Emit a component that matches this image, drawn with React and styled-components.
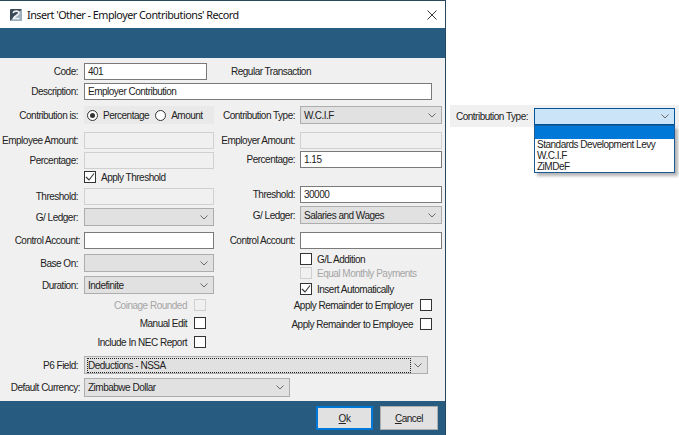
import styled, { createGlobalStyle } from 'styled-components';

const Global = createGlobalStyle`
  html, body {
    margin: 0;
    background: #fff;
  }
  body {
    font-family: "Liberation Sans", Arial, sans-serif;
    font-size: 10px;
    letter-spacing: -0.5px;
    color: #222;
  }
`;

const Page = styled.div`
  width: 679px;
  height: 435px;
  display: flex;
  overflow: hidden;
`;
const Dialog = styled.div`
  width: 445px;
  height: 434px;
  flex: none;
  display: flex;
  flex-direction: column;
  background: #f0f0f0;
  border-top: 1px solid #2a4a5e;
  border-right: 1px solid #24485f;
  border-bottom: 1px solid #24485f;
  box-sizing: content-box;
`;
const TitleBar = styled.div`
  height: 27px;
  display: flex;
  align-items: center;
  background: #fff;
  padding: 0 8px 0 9px;
  font-family: "Noto Sans", sans-serif;
  font-size: 10.8px;
  letter-spacing: -0.5px;
  color: #111;
`;
const TitleText = styled.span`
  flex: 1;
  margin-left: 4px;
`;
const Band = styled.div`
  height: 30px;
  background: #275b80;
`;
const Body = styled.div`
  flex: 1;
  padding-top: 5px;
  display: flex;
  flex-direction: column;
`;
const Row = styled.div`
  display: flex;
  align-items: center;
  height: ${p => p.$h || 18}px;
  margin-top: ${p => p.$top || 0}px;
`;
const Label = styled.label`
  width: ${p => p.$w || 78}px;
  flex: none;
  text-align: right;
  white-space: nowrap;
  margin-right: ${p => p.$gap || 6}px;
`;
const Field = styled.div`
  width: ${p => p.$w}px;
  height: 100%;
  box-sizing: border-box;
  padding: 0 3px;
  display: flex;
  align-items: center;
  background: ${p => (p.$off ? '#f0f0f0' : '#fff')};
  border: 1px solid ${p => (p.$off ? '#d0d0d0' : '#7a7a7a')};
`;
const Combo = styled.div`
  width: ${p => p.$w}px;
  height: 100%;
  box-sizing: border-box;
  padding: 0 5px 0 3px;
  display: flex;
  align-items: center;
  justify-content: space-between;
  background: #e1e1e1;
  border: 1px solid #adadad;
`;
const ComboText = styled.span`
  flex: 1;
  line-height: 13px;
  outline: ${p => (p.$focus ? '1px dotted #222' : 'none')};
  margin-right: ${p => (p.$focus ? '4px' : '0')};
`;
const Columns = styled.div`
  display: flex;
  margin-top: 6px;
`;
const Column = styled.div`
  display: flex;
  flex-direction: column;
  width: ${p => p.$w}px;
  flex: none;
`;
const RadioGroup = styled.div`
  width: 130px;
  height: 100%;
  box-sizing: border-box;
  background: #e9e9e9;
  display: flex;
  align-items: center;
  padding-left: 3px;
`;
const Radio = styled.span`
  width: 11px;
  height: 11px;
  flex: none;
  box-sizing: border-box;
  border-radius: 50%;
  border: 1px solid #333;
  background: #fff;
  display: flex;
  align-items: center;
  justify-content: center;
  margin: 0 5px 0 ${p => p.$left || 0}px;
  &::after {
    content: '';
    display: ${p => (p.$on ? 'block' : 'none')};
    width: 5px;
    height: 5px;
    border-radius: 50%;
    background: #333;
  }
`;
const Box = styled.span`
  width: 12px;
  height: 12px;
  flex: none;
  box-sizing: border-box;
  border: 1px solid ${p => (p.$off ? '#cfcfcf' : '#333')};
  background: ${p => (p.$off ? '#f0f0f0' : '#fff')};
  display: flex;
  align-items: center;
  justify-content: center;
`;
const CheckRow = styled(Row)`
  justify-content: ${p => (p.$end ? 'flex-end' : 'flex-start')};
  padding-left: ${p => p.$left || 0}px;
  padding-right: ${p => p.$right || 0}px;
`;
const CheckText = styled.span`
  margin: ${p => (p.$after ? '0 7px 0 0' : '0 0 0 5px')};
  white-space: nowrap;
  color: ${p => (p.$off ? '#a5a5a5' : '#222')};
`;
const Note = styled.span`
  margin-left: 24px;
`;
const Footer = styled.div`
  height: 34px;
  background: #275b80;
  display: flex;
  align-items: center;
  justify-content: flex-end;
  gap: 7px;
  padding-right: 7px;
`;
const Button = styled.button`
  width: ${p => p.$w}px;
  height: 24px;
  padding: 0;
  box-sizing: border-box;
  font: inherit;
  letter-spacing: inherit;
  color: #222;
  background: #e1e1e1;
  border: ${p => (p.$main ? '2px solid #0078d7' : '1px solid #adadad')};
  u {
    text-decoration: underline;
  }
`;
const Side = styled.div`
  flex: 1;
  padding: 105px 0 0 4px;
`;
const SideStrip = styled.div`
  height: 22px;
  background: #f0f0f0;
  display: flex;
  align-items: center;
  box-sizing: border-box;
  padding: 0 0 0 6px;
`;
const SideLabel = styled.span`
  width: 78px;
  flex: none;
  white-space: nowrap;
`;
const DropWrap = styled.div`
  position: relative;
  width: 141px;
  height: 17px;
  margin-top: 1px;
`;
const DropHead = styled.div`
  height: 17px;
  box-sizing: border-box;
  background: #cce4f7;
  border: 1px solid #005499;
  display: flex;
  align-items: center;
  justify-content: flex-end;
  padding-right: 5px;
`;
const DropList = styled.ul`
  position: absolute;
  left: 0;
  right: 0;
  top: 17px;
  margin: 0;
  padding: 0;
  list-style: none;
  background: #fff;
  border: 1px solid #1a5a96;
  box-sizing: border-box;
  box-shadow: 3px 3px 3px rgba(0, 0, 0, 0.3);
`;
const DropItem = styled.li`
  height: ${p => (p.$sel ? 13 : 11)}px;
  line-height: 11px;
  padding-left: 2px;
  background: ${p => (p.$sel ? '#0078d7' : '#fff')};
  white-space: nowrap;
`;

const Chevron = () => (
  <svg width="8" height="5" viewBox="0 0 8 5" fill="none">
    <path d="M0.5 0.5 L4 4 L7.5 0.5" stroke="#6a6a6a" strokeWidth="1" />
  </svg>
);

const Tick = () => (
  <svg width="10" height="10" viewBox="0 0 10 10" fill="none">
    <path d="M1 5 L4 8 L9 1.5" stroke="#333" strokeWidth="1.1" />
  </svg>
);

const AppIcon = () => (
  <svg width="14" height="14" viewBox="0 0 14 14">
    <rect x="1" y="1" width="12" height="12" rx="1" fill="#3a4a58" />
    <path d="M1 13 L13 1 V13 Z" fill="#9fb0bd" />
    <path d="M4 5 C5 2.5 10 2.5 10 5 C10 7 5 8 4.5 10.5 H10.5" fill="none" stroke="#eef2f5" strokeWidth="1.6" />
  </svg>
);

const CloseIcon = () => (
  <svg width="10" height="10" viewBox="0 0 10 10" fill="none">
    <path d="M0.5 0.5 L9.5 9.5 M9.5 0.5 L0.5 9.5" stroke="#222" strokeWidth="0.9" />
  </svg>
);

const App = () => (
  <Page>
    <Global />
    <Dialog>
      <TitleBar>
        <AppIcon />
        <TitleText>Insert 'Other - Employer Contributions' Record</TitleText>
        <CloseIcon />
      </TitleBar>
      <Band />
      <Body>
        <Row $h={17}>
          <Label>Code:</Label>
          <Field $w={123}>401</Field>
          <Note>Regular Transaction</Note>
        </Row>
        <Row $h={17} $top={3}>
          <Label>Description:</Label>
          <Field $w={348}>Employer Contribution</Field>
        </Row>
        <Columns>
          <Column $w={221}>
            <Row>
              <Label>Contribution is:</Label>
              <RadioGroup>
                <Radio $on />
                Percentage
                <Radio $left={6} />
                Amount
              </RadioGroup>
            </Row>
            <Row $h={17} $top={8}>
              <Label>Employee Amount:</Label>
              <Field $w={130} $off />
            </Row>
            <Row $h={17} $top={3}>
              <Label>Percentage:</Label>
              <Field $w={130} $off />
            </Row>
            <CheckRow $h={12} $top={2} $left={84}>
              <Box><Tick /></Box>
              <CheckText>Apply Threshold</CheckText>
            </CheckRow>
            <Row $h={17} $top={5}>
              <Label>Threshold:</Label>
              <Field $w={130} $off />
            </Row>
            <Row $top={3}>
              <Label>G/ Ledger:</Label>
              <Combo $w={130}><span /><Chevron /></Combo>
            </Row>
            <Row $h={17} $top={6}>
              <Label $w={80} $gap={4}>Control Account:</Label>
              <Field $w={130} />
            </Row>
            <Row $top={5}>
              <Label>Base On:</Label>
              <Combo $w={130}><span /><Chevron /></Combo>
            </Row>
            <Row $top={4}>
              <Label>Duration:</Label>
              <Combo $w={130}>Indefinite<Chevron /></Combo>
            </Row>
            <CheckRow $h={12} $top={5} $end $right={15}>
              <CheckText $after $off>Coinage Rounded</CheckText>
              <Box $off />
            </CheckRow>
            <CheckRow $h={12} $top={6} $end $right={15}>
              <CheckText $after>Manual Edit</CheckText>
              <Box />
            </CheckRow>
            <CheckRow $h={12} $top={7} $end $right={15}>
              <CheckText $after>Include In NEC Report</CheckText>
              <Box />
            </CheckRow>
          </Column>
          <Column $w={221}>
            <Row>
              <Label $w={74} $gap={5}>Contribution Type:</Label>
              <Combo $w={142}>W.C.I.F<Chevron /></Combo>
            </Row>
            <Row $h={17} $top={8}>
              <Label $w={74} $gap={5}>Employer Amount:</Label>
              <Field $w={142} $off />
            </Row>
            <Row $h={17} $top={2}>
              <Label $w={74} $gap={5}>Percentage:</Label>
              <Field $w={142}>1.15</Field>
            </Row>
            <Row $h={17} $top={18}>
              <Label $w={74} $gap={5}>Threshold:</Label>
              <Field $w={142}>30000</Field>
            </Row>
            <Row $top={3}>
              <Label $w={74} $gap={5}>G/ Ledger:</Label>
              <Combo $w={142}>Salaries and Wages<Chevron /></Combo>
            </Row>
            <Row $h={17} $top={8}>
              <Label $w={74} $gap={5}>Control Account:</Label>
              <Field $w={142} />
            </Row>
            <CheckRow $h={12} $top={4} $left={79}>
              <Box />
              <CheckText>G/L Addition</CheckText>
            </CheckRow>
            <CheckRow $h={12} $top={2} $left={79}>
              <Box $off />
              <CheckText $off>Equal Monthly Payments</CheckText>
            </CheckRow>
            <CheckRow $h={12} $top={4} $left={79}>
              <Box><Tick /></Box>
              <CheckText>Insert Automatically</CheckText>
            </CheckRow>
            <CheckRow $h={12} $top={4} $end $right={10}>
              <CheckText $after>Apply Remainder to Employer</CheckText>
              <Box />
            </CheckRow>
            <CheckRow $h={12} $top={7} $end $right={10}>
              <CheckText $after>Apply Remainder to Employee</CheckText>
              <Box />
            </CheckRow>
          </Column>
        </Columns>
        <Row $top={8}>
          <Label>P6 Field:</Label>
          <Combo $w={344}>
            <ComboText $focus>Deductions - NSSA</ComboText>
            <Chevron />
          </Combo>
        </Row>
        <Row $h={19} $top={4}>
          <Label $w={80} $gap={4}>Default Currency:</Label>
          <Combo $w={206}>Zimbabwe Dollar<Chevron /></Combo>
        </Row>
      </Body>
      <Footer>
        <Button $w={57} $main><u>O</u>k</Button>
        <Button $w={58}><u>C</u>ancel</Button>
      </Footer>
    </Dialog>
    <Side>
      <SideStrip>
        <SideLabel>Contribution Type:</SideLabel>
        <DropWrap>
          <DropHead><Chevron /></DropHead>
          <DropList>
            <DropItem $sel />
            <DropItem>Standards Development Levy</DropItem>
            <DropItem>W.C.I.F</DropItem>
            <DropItem>ZiMDeF</DropItem>
          </DropList>
        </DropWrap>
      </SideStrip>
    </Side>
  </Page>
);

export default App;
